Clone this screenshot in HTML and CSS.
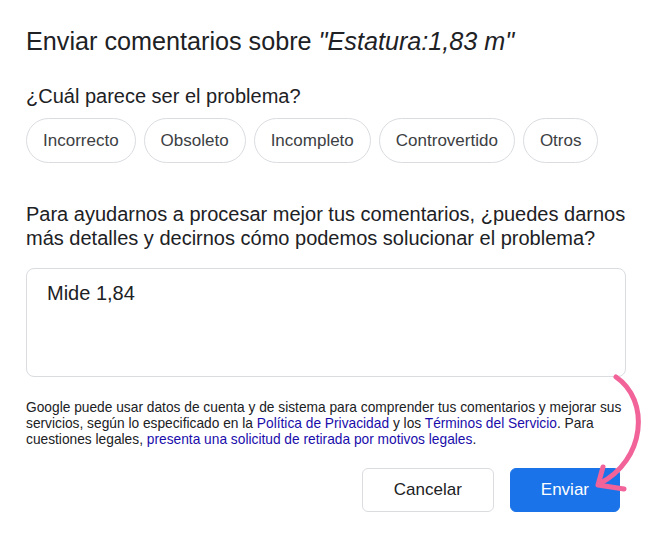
FILE: index.html
```html
<!doctype html>
<html lang="es">
<head>
    <meta charset="UTF-8">
    <meta name="viewport" content="width=device-width, initial-scale=1.0">
    <title>Enviar comentarios</title>
    <link rel="stylesheet" href="styles.css">
</head>
<body>
    <div id="dialog">
        <h1 class="title">Enviar comentarios sobre <em>"Estatura:1,83 m"</em></h1>
        <p class="question">¿Cuál parece ser el problema?</p>
        <ul class="chips">
            <li>Incorrecto</li>
            <li>Obsoleto</li>
            <li>Incompleto</li>
            <li>Controvertido</li>
            <li>Otros</li>
        </ul>
        <p class="details">Para ayudarnos a procesar mejor tus comentarios, ¿puedes darnos más detalles y decirnos cómo podemos solucionar el problema?</p>
        <div class="input">Mide 1,84</div>
        <p class="legal">Google puede usar datos de cuenta y de sistema para comprender tus comentarios y mejorar sus servicios, según lo especificado en la <a href="#">Política de Privacidad</a> y los <a href="#">Términos del Servicio</a>. Para cuestiones legales, <a href="#">presenta una solicitud de retirada por motivos legales</a>.</p>
        <div class="actions">
            <button class="btn cancel">Cancelar</button>
            <button class="btn send">Enviar</button>
        </div>

        <svg class="arrow" width="651" height="535" viewBox="0 0 651 535">
            <path d="M616 377 C650 400, 646 460, 599 484" />
            <path d="M603 467 L598 485 L624 489" />
        </svg>
    </div>
</body>
</html>
```

FILE: styles.css
```css
body{
    margin: 0;
    background: #fff;
    font-family: "Liberation Sans", Arial, sans-serif;
    color: #202124;
}
#dialog{
    position: relative;
    width: 651px;
    height: 535px;
    box-sizing: border-box;
    padding: 26px 25px 0 26px;
}
.title{
    margin: 0;
    font-size: 25.2px;
    line-height: 30px;
    font-weight: normal;
}
.question{
    margin: 28px 0 0;
    font-size: 20px;
    line-height: 24px;
}
.chips{
    display: flex;
    gap: 8px;
    margin: 10px 0 0;
    padding: 0;
    list-style: none;
}
.chips li{
    height: 45px;
    box-sizing: border-box;
    padding: 0 16px;
    border: 1px solid #dadce0;
    border-radius: 23px;
    font-size: 17px;
    line-height: 43px;
    color: #3c4043;
}
.details{
    margin: 39px 0 0;
    font-size: 20px;
    line-height: 24px;
}
.input{
    margin-top: 18px;
    height: 109px;
    box-sizing: border-box;
    padding: 12px 20px;
    border: 1px solid #dadce0;
    border-radius: 8px;
    font-size: 20px;
    line-height: 24px;
}
.legal{
    margin: 23px 0 0;
    font-size: 13.75px;
    line-height: 16px;
}
.legal a{
    color: #1a0dab;
    text-decoration: none;
}
.actions{
    display: flex;
    justify-content: flex-end;
    gap: 16px;
    margin-top: 20px;
    padding-right: 6px;
}
.btn{
    height: 44px;
    border-radius: 6px;
    font-family: inherit;
    font-size: 17px;
}
.cancel{
    padding: 0 31px;
    background: #fff;
    border: 1px solid #dadce0;
    color: #202124;
}
.send{
    padding: 0 30px;
    background: #1a73e8;
    border: 1px solid #1a73e8;
    color: #fff;
}
.arrow{
    position: absolute;
    left: 0;
    top: 0;
    pointer-events: none;
}
.arrow path{
    fill: none;
    stroke: #f2639a;
    stroke-width: 5;
    stroke-linecap: round;
    stroke-linejoin: round;
}
```
